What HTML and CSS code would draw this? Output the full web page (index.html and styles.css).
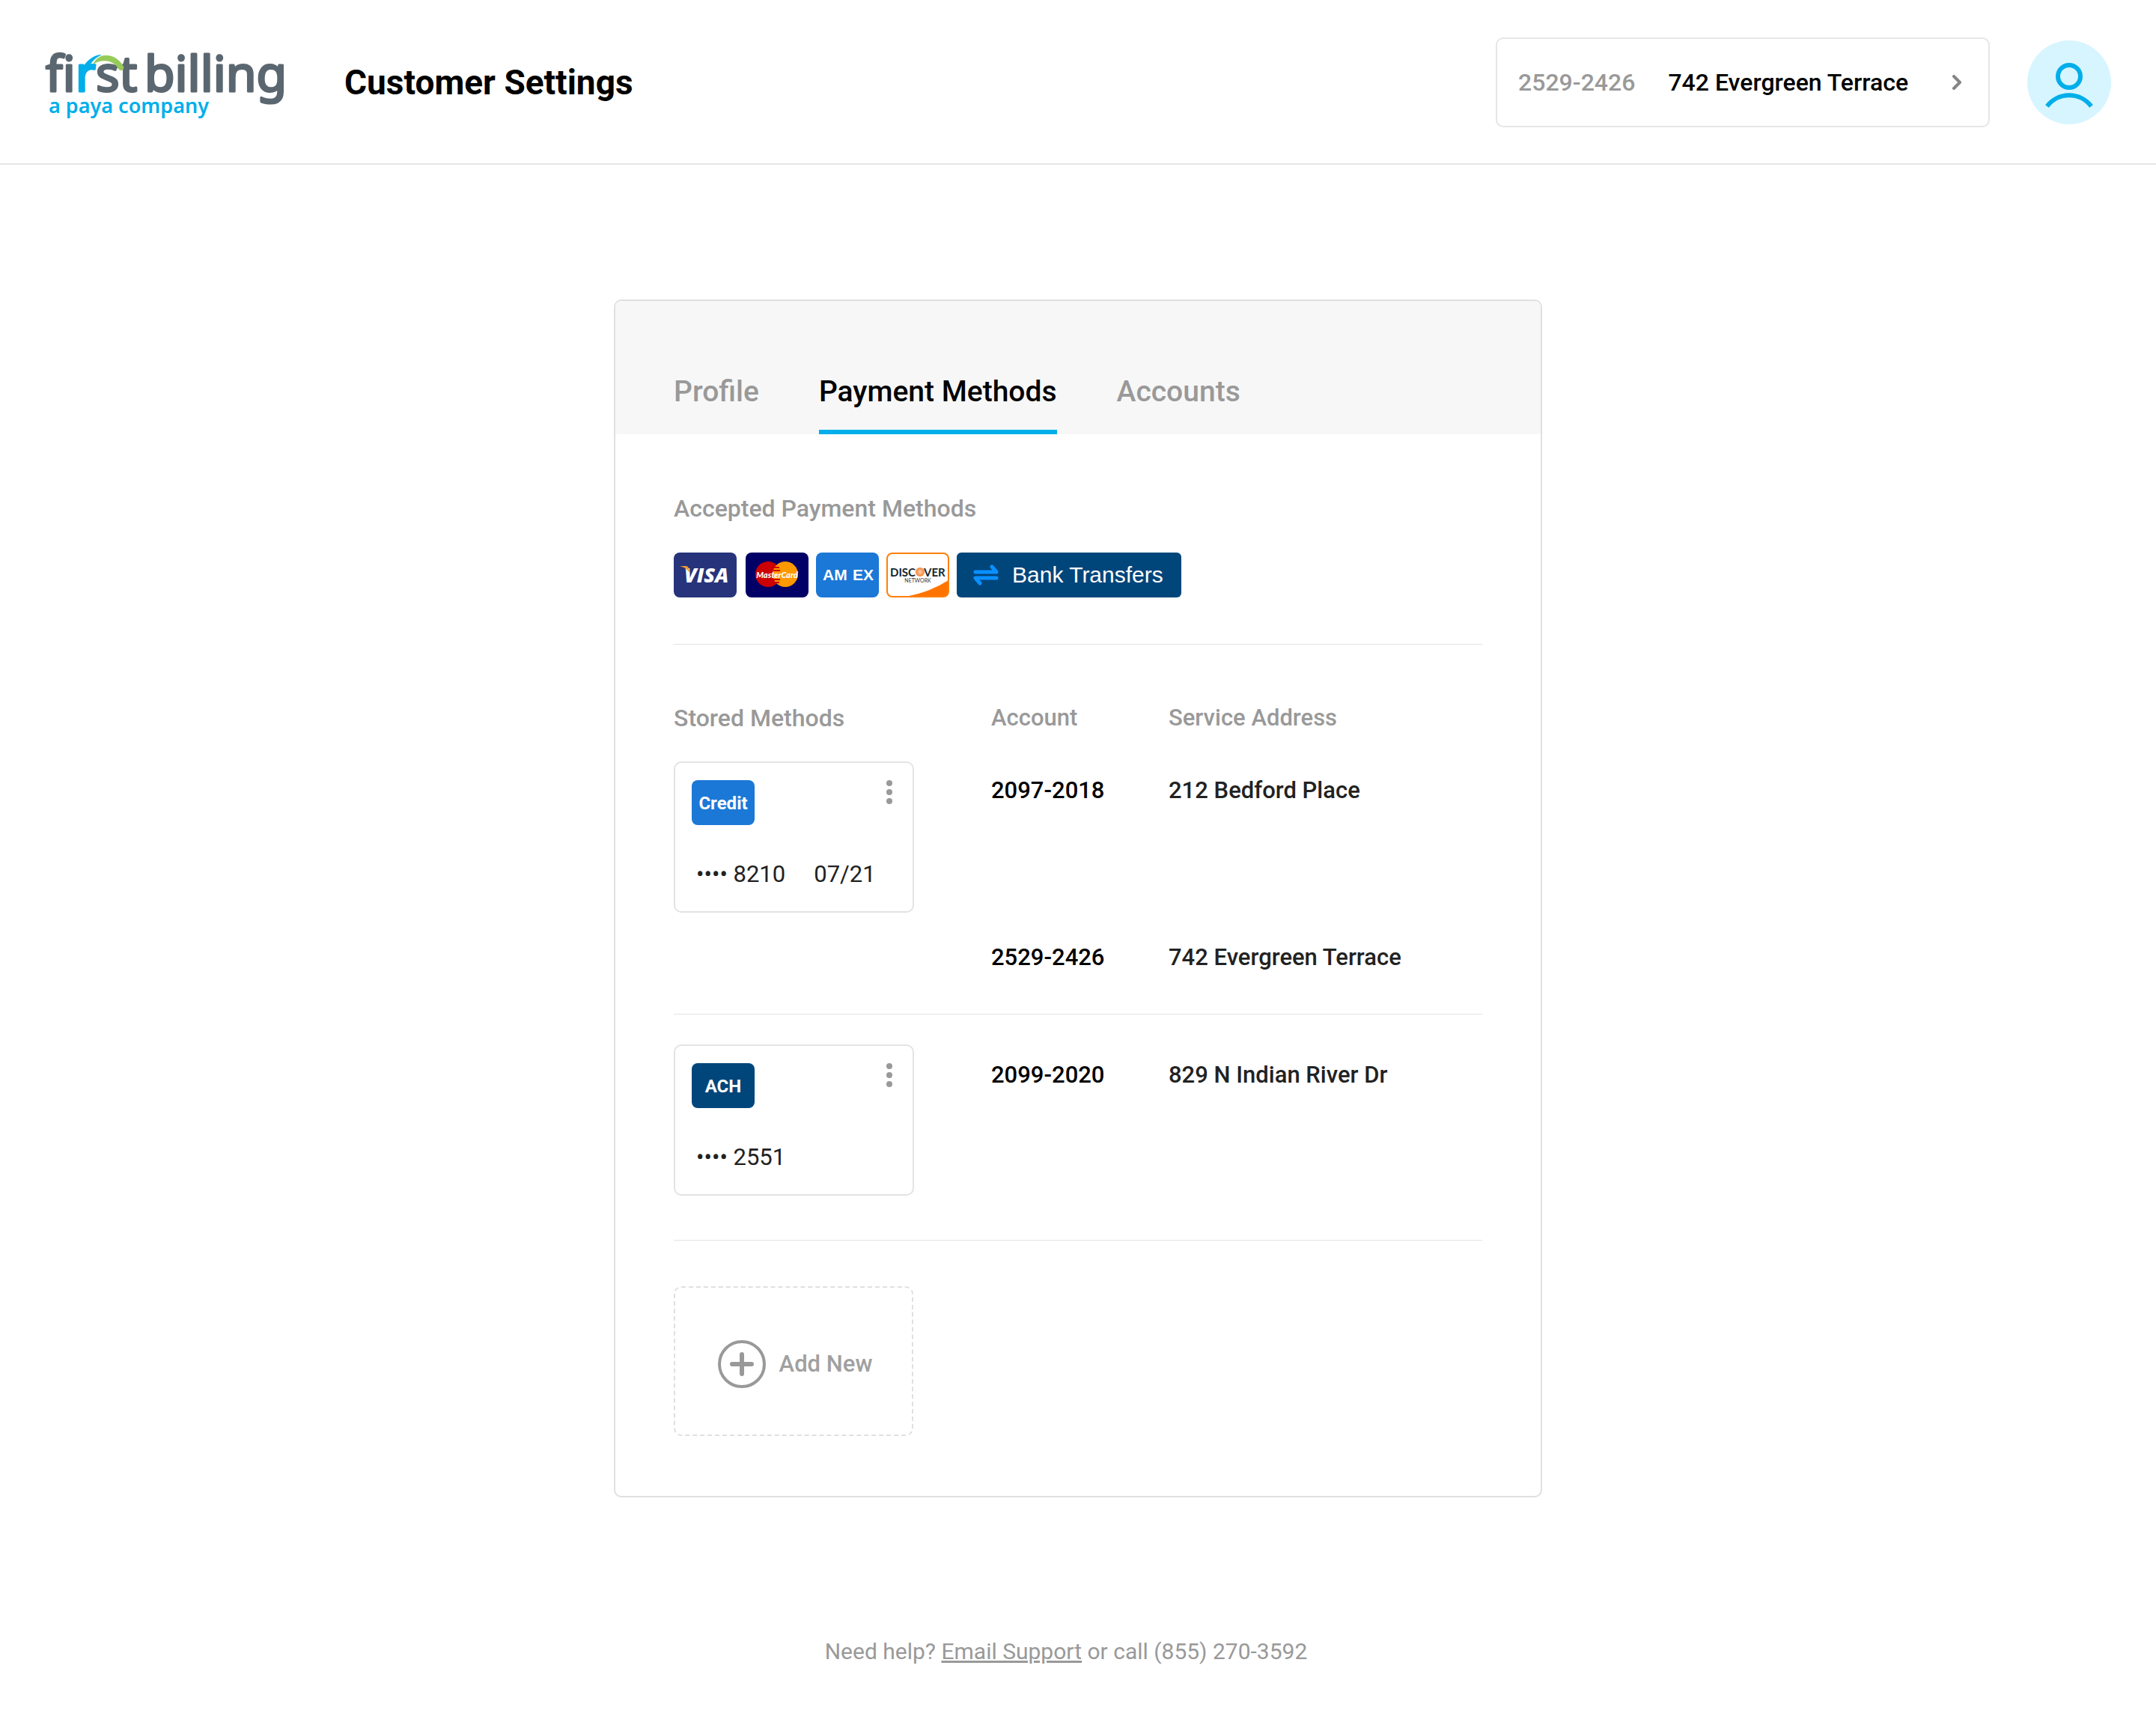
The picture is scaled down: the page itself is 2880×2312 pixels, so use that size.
FILE: index.html
```html
<!DOCTYPE html>
<html lang="en">
<head>
<meta charset="utf-8">
<meta name="viewport" content="width=device-width, initial-scale=1">
<title>Customer Settings</title>
<link rel="stylesheet" href="styles.css">
</head>
<body>
<header class="topbar">
  <a class="logo" href="#" aria-label="firstbilling, a paya company">
    <svg class="logo-art" width="340" height="92" viewBox="0 0 340 92">
      <text class="wordmark" x="1" y="58">fi<tspan class="wordmark-r">r</tspan>st</text>
      <text class="wordmark" x="133" y="58">billing</text>
      <path fill="#00aeea" d="M50 27C56 16 66 9 76 9C66 14 58 22 54 36Z"/>
      <path fill="#96ca5a" d="M64 22C68 14 74 10 80 10C92 9 101 17 105 25C106 28 104 30 102 30C99 30 98 28 97 26C90 17 78 14 64 22Z"/>
      <text class="tagline" x="5" y="87">a paya company</text>
    </svg>
  </a>
  <h1 class="page-title">Customer Settings</h1>
  <button class="account-picker" type="button">
    <span class="account-number">2529-2426</span>
    <span>742 Evergreen Terrace</span>
    <svg class="chevron" width="12" height="20" viewBox="0 0 12 20" fill="none" stroke="#858585" stroke-width="4" stroke-linecap="round" stroke-linejoin="round"><path d="M2 2L10 10L2 18"/></svg>
  </button>
  <button class="avatar" type="button" aria-label="Your profile">
    <svg width="112" height="112" viewBox="0 0 112 112" fill="none" stroke="#00aeea" stroke-width="6"><circle cx="56" cy="48" r="15"/><path d="M26.500 88A37 37 0 0 1 85.500 88"/></svg>
  </button>
</header>

<main class="card">
  <nav class="tabs">
    <a class="tab" href="#">Profile</a>
    <a class="tab tab-active" href="#" aria-current="page">Payment Methods</a>
    <a class="tab" href="#">Accounts</a>
  </nav>
  <div class="panel">
    <section class="accepted">
      <h2 class="label">Accepted Payment Methods</h2>
      <div class="brands">
        <svg class="brand" width="84" height="60" viewBox="0 0 84 60" role="img" aria-label="Visa">
          <rect width="84" height="60" rx="8" fill="#27337a"/>
          <text class="visa" x="14" y="40">VISA</text>
          <path fill="#f29a2e" d="M8 18H16Q19 18 20 21L22 28Q17 20 8 18Z"/>
        </svg>
        <svg class="brand" width="84" height="60" viewBox="0 0 84 60" role="img" aria-label="MasterCard">
          <rect width="84" height="60" rx="8" fill="#000066"/>
          <circle cx="30" cy="29" r="17" fill="#cc0000"/>
          <circle cx="53" cy="29" r="17" fill="#ff9900"/>
          <path stroke="#cc0000" stroke-width="2" d="M38 20H45M37 24H46M36 36H46M37 40H45"/>
          <text class="mastercard" x="42" y="34" text-anchor="middle">MasterCard</text>
        </svg>
        <svg class="brand" width="84" height="60" viewBox="0 0 84 60" role="img" aria-label="American Express">
          <rect width="84" height="60" rx="8" fill="#1b78d6"/>
          <text class="amex" x="9" y="37">AM</text>
          <text class="amex" x="49" y="37">EX</text>
        </svg>
        <svg class="brand" width="84" height="60" viewBox="0 0 84 60" role="img" aria-label="Discover">
          <defs><radialGradient id="disc"><stop offset="0" stop-color="#fbd3b0"/><stop offset="1" stop-color="#f58233"/></radialGradient></defs>
          <rect x="1" y="1" width="82" height="58" rx="7" fill="#fff"/>
          <path fill="#ff7300" d="M83 37V52Q83 59 76 59H26Q58 53 83 37Z"/>
          <rect x="1" y="1" width="82" height="58" rx="7" fill="none" stroke="#ff7f0a" stroke-width="2"/>
          <text class="discover" x="5" y="32">DISC</text>
          <circle cx="45" cy="26" r="6" fill="url(#disc)"/>
          <text class="discover" x="50" y="32">VER</text>
          <text class="network" x="42" y="40" text-anchor="middle">NETWORK</text>
        </svg>
        <span class="bank">
          <svg width="34" height="28" viewBox="0 0 34 28" fill="none" stroke="#0a90ff" stroke-width="5" stroke-linecap="round" stroke-linejoin="round"><path d="M3 10H31L25 3M31 18H3L9 25"/></svg>
          Bank Transfers
        </span>
      </div>
    </section>

    <table class="methods">
      <thead>
        <tr><th class="col-method" scope="col">Stored Methods</th><th class="col-account" scope="col">Account</th><th scope="col">Service Address</th></tr>
      </thead>
      <tbody>
        <tr class="row-first">
          <td>
            <article class="method">
              <div class="method-top">
                <span class="badge badge-credit">Credit</span>
                <button class="menu" type="button" aria-label="Options for card 8210"><svg width="8" height="32" viewBox="0 0 8 32" fill="#999"><circle cx="4" cy="4" r="4"/><circle cx="4" cy="16" r="4"/><circle cx="4" cy="28" r="4"/></svg></button>
              </div>
              <p class="method-info"><span>•••• 8210</span><span>07/21</span></p>
            </article>
          </td>
          <td class="text-cell number">2097-2018</td>
          <td class="text-cell">212 Bedford Place</td>
        </tr>
        <tr class="row-extra">
          <td></td>
          <td class="text-cell number">2529-2426</td>
          <td class="text-cell">742 Evergreen Terrace</td>
        </tr>
        <tr class="row-next">
          <td>
            <article class="method">
              <div class="method-top">
                <span class="badge badge-ach">ACH</span>
                <button class="menu" type="button" aria-label="Options for account 2551"><svg width="8" height="32" viewBox="0 0 8 32" fill="#999"><circle cx="4" cy="4" r="4"/><circle cx="4" cy="16" r="4"/><circle cx="4" cy="28" r="4"/></svg></button>
              </div>
              <p class="method-info"><span>•••• 2551</span></p>
            </article>
          </td>
          <td class="text-cell number">2099-2020</td>
          <td class="text-cell">829 N Indian River Dr</td>
        </tr>
      </tbody>
    </table>

    <button class="add-new" type="button">
      <svg width="64" height="64" viewBox="0 0 64 64" fill="none" stroke="#999" stroke-linecap="round"><circle cx="32" cy="32" r="30" stroke-width="4"/><path stroke-width="6" d="M32 19V45M19 32H45"/></svg>
      Add New
    </button>
  </div>
</main>

<footer class="help">Need help? <a href="#">Email Support</a> or call (855) 270-3592</footer>
</body>
</html>
```
FILE: styles.css
```css
* {
  box-sizing: border-box;
  margin: 0;
}

body {
  background: #fff;
  color: #222;
  font-family: Roboto, "Liberation Sans", sans-serif;
  font-size: 32px;
  line-height: 38px;
}

button {
  border: 0;
  background: none;
  padding: 0;
  font: inherit;
  color: inherit;
  cursor: pointer;
}

svg {
  display: block;
  flex: none;
}

/* Top bar */
.topbar {
  display: flex;
  align-items: center;
  padding: 50px 60px 48px;
  border-bottom: 2px solid #e6e6e6;
}

.logo {
  margin-right: 60px;
}

.logo-art {
  overflow: visible;
}

.wordmark {
  font-family: "Noto Sans", sans-serif;
  font-size: 66px;
  font-weight: 400;
  fill: #5b6770;
  stroke: #5b6770;
  stroke-width: 3;
  stroke-linejoin: round;
}

.wordmark-r {
  fill: #00aeea;
  stroke: #00aeea;
}

.tagline {
  font-family: "Noto Sans", sans-serif;
  font-size: 27px;
  font-weight: 600;
  fill: #00aeea;
}

.page-title {
  font-size: 46px;
  font-weight: 700;
  line-height: 56px;
  color: #000;
}

.account-picker {
  display: flex;
  align-items: center;
  gap: 44px;
  width: 660px;
  height: 120px;
  margin-left: auto;
  padding: 0 36px 0 28px;
  border: 2px solid #e6e6e6;
  border-radius: 10px;
  font-weight: 500;
  color: #000;
}

.account-number {
  color: #999;
}

.chevron {
  margin-left: auto;
}

.avatar {
  margin-left: 50px;
  border-radius: 50%;
  background: #d7f5ff;
}

/* Settings card */
.card {
  max-width: 1240px;
  margin: 180px auto 0;
  border: 2px solid #e0e0e0;
  border-radius: 10px;
  overflow: hidden;
}

.tabs {
  display: flex;
  gap: 80px;
  padding: 98px 78px 0;
  background: #f7f7f7;
}

.tab {
  padding-bottom: 28px;
  border-bottom: 6px solid transparent;
  font-size: 39px;
  font-weight: 500;
  line-height: 46px;
  color: #999;
  text-decoration: none;
}

.tab-active {
  border-color: #00aeea;
  color: #000;
}

.panel {
  padding: 80px 78px;
}

.label {
  font-size: 32px;
  font-weight: 500;
  color: #999;
}

.accepted {
  padding-bottom: 62px;
  border-bottom: 1px solid #e3e3e3;
}

.brands {
  display: flex;
  gap: 10px;
  margin-top: 40px;
}

.brand:first-child {
  margin-right: 2px;
}

.visa {
  font: italic 800 27px "Open Sans", sans-serif;
  fill: #fff;
}

.mastercard {
  font: italic 900 11px Lato, sans-serif;
  fill: #fff;
}

.amex {
  font: 700 21px "Liberation Sans", sans-serif;
  fill: #fff;
}

.discover {
  font: 700 15px Lato, sans-serif;
  fill: #14262e;
}

.network {
  font: 400 7px Lato, sans-serif;
  fill: #333;
}

.bank {
  display: flex;
  align-items: center;
  gap: 18px;
  width: 300px;
  height: 60px;
  padding-left: 22px;
  border-radius: 6px;
  background: #00467b;
  color: #fff;
  font-family: "Liberation Sans", sans-serif;
  font-size: 30px;
}

/* Stored methods */
.methods {
  width: 100%;
  margin-top: 79px;
  border-collapse: separate;
  border-spacing: 0;
  table-layout: fixed;
  text-align: left;
}

.methods th {
  padding: 0 0 39px;
  font-size: 31px;
  font-weight: 500;
  color: #999;
}

.methods td {
  padding: 0;
  vertical-align: top;
}

.methods .col-method {
  width: 424px;
  font-size: 32px;
}

.col-account {
  width: 237px;
}

.methods .text-cell {
  padding-top: 20px;
  font-size: 31px;
  font-weight: 500;
}

.methods .number {
  color: #000;
}

.methods .row-extra td {
  padding-top: 41px;
  padding-bottom: 56px;
  border-bottom: 1px solid #e3e3e3;
}

.methods .row-next td {
  padding-top: 40px;
  padding-bottom: 59px;
  border-bottom: 1px solid #e3e3e3;
}

.methods .row-next .text-cell {
  padding-top: 62px;
}

.method {
  width: 321px;
  height: 202px;
  padding: 23px 27px 0 22px;
  border: 2px solid #e3e3e3;
  border-radius: 10px;
}

.method-top {
  display: flex;
  justify-content: space-between;
  align-items: flex-start;
}

.badge {
  width: 84px;
  height: 60px;
  border-radius: 8px;
  color: #fff;
  font-size: 24px;
  font-weight: 700;
  line-height: 62px;
  text-align: center;
}

.badge-credit {
  background: #1b78d6;
}

.badge-ach {
  background: #00467b;
}

.method-info {
  display: flex;
  gap: 38px;
  margin-top: 47px;
  padding-left: 6px;
  font-size: 31px;
}

.add-new {
  display: flex;
  align-items: center;
  justify-content: center;
  gap: 18px;
  width: 320px;
  height: 200px;
  margin-top: 61px;
  padding: 8px 0 0 4px;
  border: 2px dashed #e0e0e0;
  border-radius: 10px;
  font-size: 31px;
  font-weight: 500;
  color: #a0a0a0;
}

/* Footer */
.help {
  padding: 188px 32px 88px 0;
  font-size: 30px;
  line-height: 36px;
  text-align: center;
  color: #999;
}

.help a {
  color: inherit;
}
```
